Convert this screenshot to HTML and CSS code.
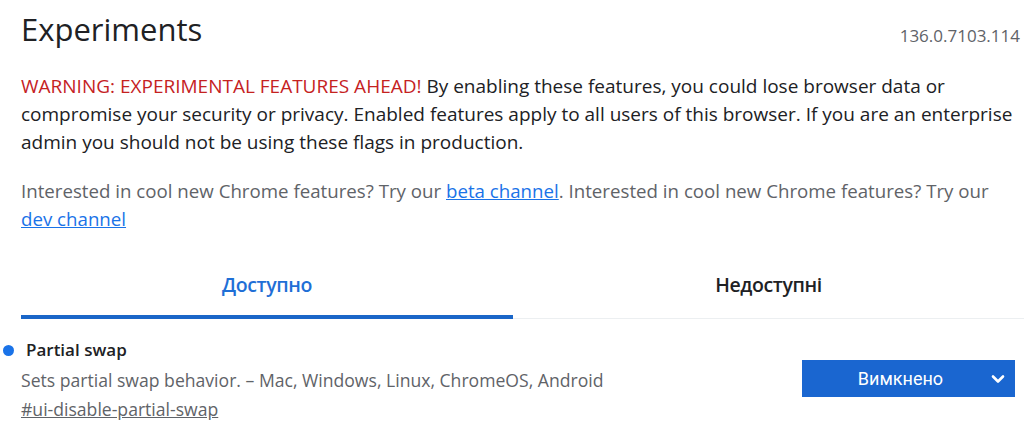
FILE: index.html
```html
<!DOCTYPE html>
<html lang="uk">
<head>
<meta charset="utf-8">
<link rel="stylesheet" href="styles.css">
</head>
<body>
<div class="page">
  <header class="head">
    <h1 class="title">Experiments</h1>
    <span class="version">136.0.7103.114</span>
  </header>
  <p class="warning"><span class="warn-red">WARNING: EXPERIMENTAL FEATURES AHEAD!</span><span> By enabling these features, you could lose browser data or compromise your security or privacy. Enabled features apply to all users of this browser. If you are an enterprise admin you should not be using these flags in production.</span></p>
  <p class="promo">Interested in cool new Chrome features? Try our <a href="#">beta channel</a>. Interested in cool new Chrome features? Try our <a href="#">dev channel</a></p>
  <nav class="tabs">
    <div class="tab active">Доступно</div>
    <div class="tab">Недоступні</div>
  </nav>
  <section class="feature">
    <div class="feature-info">
      <h2 class="feature-name"><span class="dot"></span>Partial swap</h2>
      <p class="feature-desc">Sets partial swap behavior. – Mac, Windows, Linux, ChromeOS, Android</p>
      <a class="feature-link" href="#">#ui-disable-partial-swap</a>
    </div>
    <div class="select">
      <span>Вимкнено</span>
      <svg class="chev" width="14" height="10" viewBox="0 0 14 10"><path d="M2 2.5 L7 7.5 L12 2.5" fill="none" stroke="#fff" stroke-width="2.6" stroke-linecap="round" stroke-linejoin="round"/></svg>
    </div>
  </section>
</div>
</body>
</html>
```
FILE: styles.css
```css
html, body { margin: 0; padding: 0; background: #fff; }
body { font-family: "Open Sans", "Noto Sans", sans-serif; color: #202124; overflow: hidden; }
.page { width: 1024px; height: 443px; overflow: hidden; }
.head { display: flex; justify-content: space-between; align-items: flex-end; padding: 0 4px 0 21px; height: 49px; }
.title { margin: 0; font-weight: 400; font-size: 31px; line-height: 40px; color: #202124; }
.version { font-size: 17px; color: #5f6368; line-height: 22px; position: relative; top: -2px; }
.warning { margin: 23px 0 0 21px; width: 1003px; font-size: 19px; line-height: 28px; color: #202124; }
.warn-red { color: #c5221f; }
.promo { margin: 21px 0 0 21px; width: 995px; font-size: 18.7px; line-height: 28px; color: #5f6368; }
.promo a { color: #1a73e8; }
.tabs { display: flex; margin: 28px 0 0 21px; border-bottom: 1px solid #eceff1; }
.tab { flex: 1; text-align: center; font-size: 19.5px; font-weight: 600; line-height: 24px; padding: 12px 0 21px; color: #202124; letter-spacing: -0.4px; }
.tab.active { flex: 0 0 492px; color: #1f6fd6; border-bottom: 4px solid #1a66c8; padding-bottom: 17px; margin-bottom: -1px; }
.feature { display: flex; justify-content: space-between; align-items: flex-start; padding: 0 9px 0 0; margin-top: 19px; }
.feature-info { display: flex; flex-direction: column; padding-left: 21px; }
.feature-name { position: relative; margin: 0 0 0 5px; font-size: 17px; font-weight: 600; line-height: 24px; }
.dot { position: absolute; left: -23px; top: 7px; width: 11px; height: 11px; border-radius: 50%; background: #1a73e8; }
.feature-desc { margin: 4px 0 0; font-size: 17.6px; line-height: 29px; color: #5f6368; }
.feature-link { font-size: 17.6px; line-height: 29px; color: #5f6368; align-self: flex-start; }
.select { box-sizing: border-box; width: 213px; height: 37px; padding-right: 16px; background: #1a66d0; color: #fff; display: flex; align-items: center; justify-content: center; position: relative; font-family: Roboto, sans-serif; font-size: 18px; margin-top: 22px; }
.chev { position: absolute; right: 10px; top: 14px; }
```
